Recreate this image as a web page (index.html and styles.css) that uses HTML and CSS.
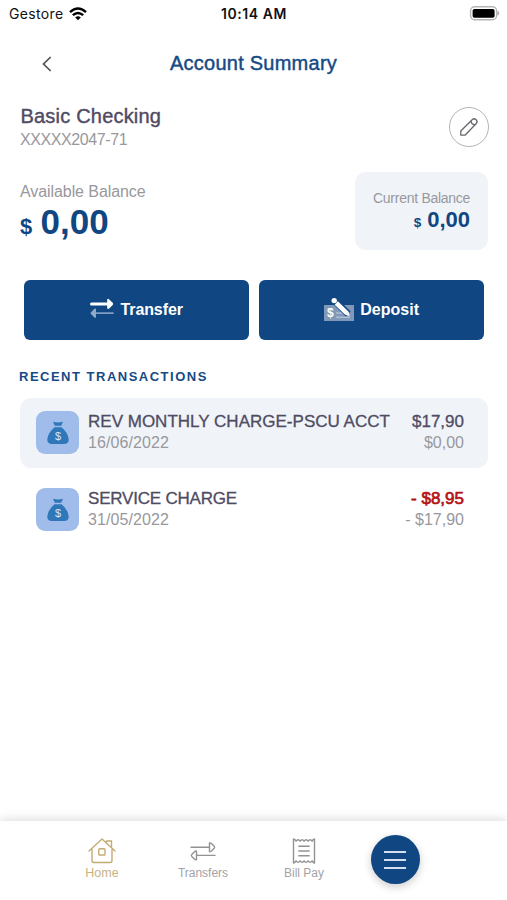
FILE: index.html
```html
<!DOCTYPE html>
<html lang="en">
<head>
<meta charset="utf-8">
<title>Account Summary</title>
<link rel="stylesheet" href="styles.css">
</head>
<body>
<div class="screen">
  <div class="status">
    <div class="carrier"><span>Gestore</span>
      <svg width="18" height="14" viewBox="0 0 18 14" fill="none" stroke="#000" stroke-width="2.4"><path d="M1 5.2Q9-2 17 5.2M3.8 8.2Q9 3.6 14.2 8.2"/><path d="M6.2 10.5Q9 8 11.8 10.5L9 13.3z" fill="#000" stroke="none"/></svg>
    </div>
    <div class="time">10:14 AM</div>
    <svg class="battery" width="31" height="15" viewBox="0 0 31 15"><rect x="1.6" y=".8" width="26" height="13" rx="4" fill="#fff" stroke="#b5b5b5" stroke-width="1.4"/><rect x="3.600" y="3" width="22" height="8.800" rx="1.800"/><path d="M28.900 5.200q2 2 0 4z" fill="#aaa" stroke="#aaa" stroke-width=".8"/></svg>
  </div>
  <header class="header">
    <svg class="back" width="12" height="18" viewBox="0 0 12 18" fill="none" stroke="#505056" stroke-width="1.7"><path d="M9.7 2L2.5 9l7.2 7"/></svg>
    <h1>Account Summary</h1>
  </header>
  <main>
    <section class="account">
      <div>
        <h2>Basic Checking</h2>
        <div class="number">XXXXX2047-71</div>
      </div>
      <button class="edit" aria-label="Edit"><svg width="20" height="20" viewBox="0 0 20 20" fill="none" stroke="#66666c" stroke-width="1.3" stroke-linejoin="round"><path d="M1.800 18.200v-4.200L13.400 2.500q1.800-1.500 3.700.2 1.900 2 .2 3.800L6 18.200z"/><path d="M12.100 3.800q-.3 3.600 4.100 3.900"/></svg></button>
    </section>
    <section class="balances">
      <div class="available">
        <div class="label">Available Balance</div>
        <div class="amount"><small>$</small><b>0,00</b></div>
      </div>
      <div class="current">
        <div class="label">Current Balance</div>
        <div class="amount"><small>$</small><b>0,00</b></div>
      </div>
    </section>
    <section class="actions">
      <button class="action transfer"><svg width="24" height="20" viewBox="0 0 24 20"><path d="M1.500 6H18" stroke="#fff" stroke-width="3" stroke-linecap="round"/><path d="M17.200 1.200q1-.8 2 .2l3.500 3.400q1.100 1.200 0 2.300l-3.500 3.400q-1 .9-2 .1z" fill="#fff"/><path d="M6 15.200h17" stroke="#7f9bbf" stroke-width="1.800" stroke-linecap="round"/><path d="M6 10.700v8.900q-.8.500-1.600-.2L1 16.100q-.8-.9 0-1.900l3.400-3.400q.8-.7 1.600-.1z" fill="#8fa9c9"/></svg><span>Transfer</span></button>
      <button class="action deposit"><svg width="30" height="26" viewBox="0 0 30 26"><path d="M0 9h30v16H0z" fill="#8199b9"/><path d="M12 17h8M12 21.200h14" stroke="#c3cfde" stroke-width="1"/><path d="M11.500 5.500L24.200 18" stroke="#104681" stroke-width="7"/><path d="M12.300 7L23 17.300" stroke="#fff" stroke-width="4.600"/><circle cx="10.200" cy="4.600" r="2.700" fill="#fff"/><path d="M21.300 18.800l3.400-3.300.9 4.400z" fill="#fff"/><text x="3" y="20.800" class="glyph-check">$</text></svg><span>Deposit</span></button>
    </section>
    <h3>RECENT TRANSACTIONS</h3>
    <section class="list">
      <div class="row shaded">
        <div class="tile"><svg width="22" height="24" viewBox="0 0 22 24" fill="#2f77b9"><path d="M6 .8q5 1.300 10 0l-1.800 4H7.800z"/><path d="M7.500 6.300h7q7 6 7.200 12.200.1 4.400-4.700 4.500H5Q.2 22.900.3 18.500.5 12.300 7.500 6.300z"/><text x="11" y="18.600" class="glyph-bag">$</text></svg></div>
        <div class="desc"><div class="name charge">REV MONTHLY CHARGE-PSCU ACCT</div><div class="sub">16/06/2022</div></div>
        <div class="value"><div class="name">$17,90</div><div class="sub">$0,00</div></div>
      </div>
      <div class="row">
        <div class="tile"><svg width="22" height="24" viewBox="0 0 22 24" fill="#2f77b9"><path d="M6 .8q5 1.300 10 0l-1.800 4H7.800z"/><path d="M7.500 6.300h7q7 6 7.200 12.200.1 4.400-4.700 4.500H5Q.2 22.900.3 18.500.5 12.300 7.500 6.300z"/><text x="11" y="18.600" class="glyph-bag">$</text></svg></div>
        <div class="desc"><div class="name service">SERVICE CHARGE</div><div class="sub">31/05/2022</div></div>
        <div class="value"><div class="name negative">- $8,95</div><div class="sub">- $17,90</div></div>
      </div>
    </section>
  </main>
  <nav>
    <div class="tab active"><svg width="28" height="26" viewBox="0 0 28 26" fill="none" stroke="#c3ab76" stroke-width="1.400" stroke-linecap="round" stroke-linejoin="round"><path d="M1 13L14 1l13 12M4 11v11.500q0 2 2 2h16q2 0 2-2V11M18.500 4.500V3h5v6"/><rect x="10.800" y="10.800" width="6.200" height="6.200" rx=".8"/></svg><span>Home</span></div>
    <div class="tab"><svg width="28" height="26" viewBox="0 0 28 26" fill="none" stroke="#929294" stroke-width="1.400" stroke-linecap="round" stroke-linejoin="round"><path d="M2 9.300h18.500M20.500 5v8.600q.8.300 2-.6l2.700-2.700q.9-1 0-2l-2.700-2.700q-1.200-1-2-.6zM26 17.400H7.500M7.500 13.100v8.600q-.8.300-2-.6l-2.700-2.700q-.9-1 0-2l2.700-2.700q1.200-1 2-.6z"/></svg><span>Transfers</span></div>
    <div class="tab"><svg width="28" height="26" viewBox="0 0 28 26" fill="none" stroke="#929294" stroke-width="1.400" stroke-linejoin="round"><path d="M3.500 1v24q1.500-.3 2.600-2.200 2 3 4 0 2 3 4 0 2 3 4 0 2 3 4 0 1 1.900 2.400 2.200V1q-1.400.3-2.400 2.200-2-3-4 0-2-3-4 0-2-3-4 0-2-3-4 0Q5 1.300 3.500 1zM8.300 8.300h11.400M8.300 13h11.400M8.300 17.700h11.400"/></svg><span>Bill Pay</span></div>
    <button class="menu" aria-label="Menu"><i></i><i></i><i></i></button>
  </nav>
</div>
</body>
</html>
```
FILE: styles.css
```css
* { box-sizing: border-box; }
body { margin: 0; background: #fff; font-family: "Liberation Sans", Arial, sans-serif; color: #4f4b63; }
h1, h2, h3 { margin: 0; }
button { border: 0; padding: 0; font-family: inherit; }
svg { display: block; flex: none; }
.screen { width: 507px; height: 900px; display: flex; flex-direction: column; overflow: hidden; }
.status { display: grid; grid-template-columns: 1fr auto 1fr; height: 28px; padding: 0 7px 0 9px; align-items: center; font: 500 14px/28px Inter, sans-serif; color: #111; }
.carrier { display: flex; align-items: center; gap: 5px; font-weight: 400; letter-spacing: .35px; }
.carrier svg { margin-top: -1px; }
.time { font-weight: 600; letter-spacing: .55px; margin-left: -1px; }
.battery { justify-self: end; margin-top: -1px; }
.header { display: grid; grid-template-columns: 80px 1fr 80px; height: 70px; align-items: center; }
.back { margin-left: 41px; margin-top: 2px; }
h1 { color: #164a85; font-size: 20px; font-weight: 400; line-height: 24px; letter-spacing: .25px; text-align: center; -webkit-text-stroke: .45px; white-space: nowrap; }
main { flex: 1; padding: 0 19px 0 20px; }
.account { display: flex; justify-content: space-between; height: 74px; padding-top: 6px; }
h2 { font-size: 20px; font-weight: 400; line-height: 25px; letter-spacing: .2px; padding-left: .5px; -webkit-text-stroke: .4px; }
.number { font-size: 16px; line-height: 22px; letter-spacing: -.4px; color: #98989d; }
.edit { width: 40px; height: 40px; margin: 3px -1px 0 0; border: 1.5px solid #b4b4b7; border-radius: 50%; background: #fff; display: flex; align-items: center; justify-content: center; }
.balances { display: flex; justify-content: space-between; height: 107.5px; }
.label { font-size: 16px; line-height: 20px; color: #98989d; letter-spacing: -.08px; }
.available { padding-top: 10px; }
.amount { color: #104681; display: flex; align-items: baseline; }
.available .amount { line-height: 39px; font-size: 35px; }
.available small { font-size: 22px; font-weight: 700; width: 20.5px; }
.current { width: 133px; height: 78px; border-radius: 11px; background: #f0f4f8; padding: 17px 18px 0; }
.current .label { font-size: 14px; line-height: 18px; letter-spacing: -.27px; white-space: nowrap; }
.current .amount { justify-content: flex-end; line-height: 25px; font-size: 22px; }
.current small { font-size: 13.5px; font-weight: 700; margin-right: 6px; }
.actions { display: grid; grid-template-columns: 1fr 1fr; gap: 10px; padding: 0 4px; }
.action { height: 60px; border-radius: 6px; background: #104681; color: #fff; display: flex; align-items: center; justify-content: center; font-size: 16px; font-weight: 700; }
.action span { padding-top: 1px; margin-left: -.7px; }
.transfer svg { margin: -3px 7px 0 0; }
.deposit svg { margin: -2px 7px 0 0; }
.transfer span { letter-spacing: -.1px; }
h3 { color: #164a85; font-size: 13px; line-height: 18px; letter-spacing: 1.5px; margin: 28.5px 0 12px -1px; }
.row { height: 70px; display: flex; border-radius: 11px; padding: 13px 24px 0 16px; margin-bottom: 7px; }
.shaded { background: #f0f4f8; }
.tile { width: 43px; height: 43px; border-radius: 9px; background: #9fbcea; display: flex; align-items: center; justify-content: center; margin: 0 9px 0 0; }
.desc { flex: 1; white-space: nowrap; }
.value { text-align: right; white-space: nowrap; }
.name { font-size: 17px; line-height: 21px; -webkit-text-stroke: .3px; }
.charge { letter-spacing: .01px; }
.service { letter-spacing: -.2px; }
.sub { font-size: 16px; line-height: 21px; color: #98989d; }
.desc .sub { letter-spacing: .1px; }
.negative { color: #b41414; -webkit-text-stroke: .7px; }
.glyph-check { font: 700 12px "Liberation Sans", sans-serif; fill: #fff; }
.glyph-bag { font: 400 11px "Liberation Sans", sans-serif; fill: #d4e6fa; text-anchor: middle; }
nav { height: 79px; display: grid; grid-template-columns: 101px 101px 101px 80px; padding-left: 51.5px; box-shadow: 0 -2px 9px rgba(0, 0, 0, .13); background: #fff; }
.tab { display: flex; flex-direction: column; align-items: center; padding-top: 17px; font-size: 12px; line-height: 18px; color: #a3a3a5; }
.active { color: #c8b384; }
.active span { font-size: 12.5px; }
.menu { width: 49px; height: 49px; border-radius: 50%; background: #104681; box-shadow: 0 3px 8px rgba(0, 0, 0, .2); display: flex; flex-direction: column; align-items: center; justify-content: center; gap: 6px; margin: 14px 0 0 16px; }
.menu i { width: 22px; height: 2px; background: #d3e0ef; }
.tab span { margin-top: -.5px; }
```
